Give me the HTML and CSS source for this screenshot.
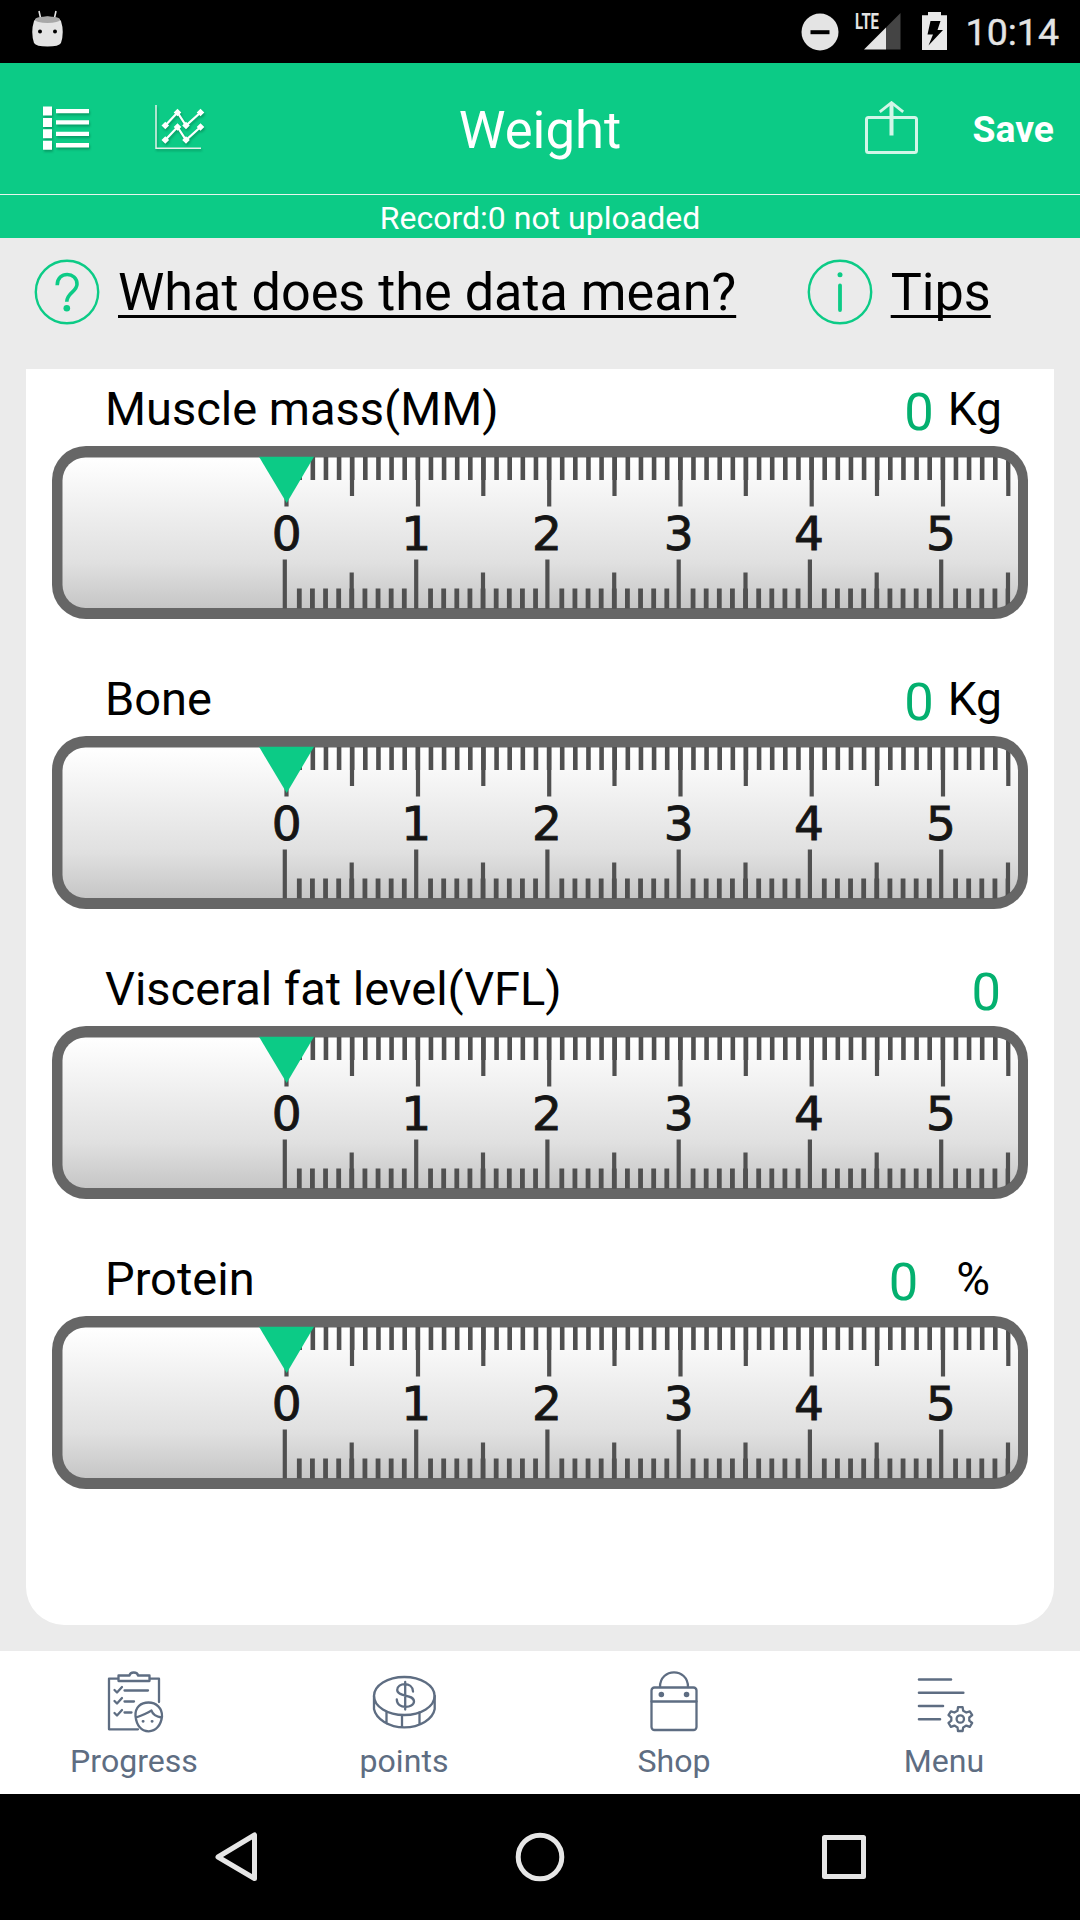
FILE: index.html
```html
<!DOCTYPE html>
<html lang="en">
<head>
<meta charset="utf-8">
<title>Weight</title>
<link rel="stylesheet" href="styles.css">
</head>
<body>
<div class="screen">
  <div class="status">
    <svg class="status-app" width="32" height="34" viewBox="32 14 32 34">
      <path d="M39 11l2 9M56 11l-2 9" stroke="#e4e4e4" stroke-width="1.6"/>
      <path d="M34 21Q35 17.500 47.500 16.500Q60 17.500 61 21Q64.500 32 61 43Q59 46.500 47.500 46.500Q36 46.500 34 43Q30.500 32 34 21Z" fill="#e4e4e4"/>
      <ellipse cx="47.500" cy="19.700" rx="12.500" ry="3.300" fill="#a8a8a8"/>
      <circle cx="40" cy="31.500" r="2"/><circle cx="55" cy="31.500" r="2"/>
    </svg>
    <div class="status-right">
      <svg class="status-icons" width="146" height="52" viewBox="801 0 146 52">
        <circle cx="820" cy="32" r="18.500" fill="#e4e4e4"/>
        <path d="M810.500 32.200H829.500" stroke="#000" stroke-width="4"/>
        <path d="M864 49.500L886 27.500V49.500Z" fill="#e4e4e4"/>
        <path d="M886 49.500V27.500L900.500 13V49.500Z" fill="#444"/>
        <text class="lte" x="855" y="29" textLength="24" lengthAdjust="spacingAndGlyphs">LTE</text>
        <path fill="#e9e9e9" fill-rule="evenodd" d="M928 12H941V15.300H947V50H922V15.300H928ZM930.500 21L927.500 34.500H933L928.500 45.500L943 30H937.500L940.500 21Z"/>
      </svg>
      <span class="clock">10:14</span>
    </div>
  </div>

  <div class="header">
    <div class="header-left">
      <svg class="shadow" width="48" height="46" viewBox="42 105 48 46" fill="#fff">
        <path d="M43 106.500h9v9h-9zM43 118h9v9h-9zM43 129.300h9v9h-9zM43 140.800h9v9h-9z"/>
        <path d="M56 109h33v4.300H56zM56 120.300h33v4.300H56zM56 131.800h33v4.300H56zM56 143.100h33v4.300H56z"/>
      </svg>
      <svg class="shadow chart" width="52" height="46" viewBox="154 105 52 46">
        <path d="M156 105V148.300H201" fill="none" stroke="#e3f3eb" stroke-width="1.500"/>
        <path d="M165.300 125.500L177.500 112.500L186 125.500L200.500 112.500M165.300 140L177.500 127L186 140L200.500 127" fill="none" stroke="#fff" stroke-width="2.200"/>
        <path fill="#fff" d="M165.300 121.700l3.800 3.800-3.800 3.800-3.800-3.800zM177.500 108.700l3.800 3.800-3.800 3.800-3.800-3.800zM186 121.700l3.800 3.800-3.800 3.800-3.800-3.800zM200.500 108.700l3.800 3.800-3.800 3.800-3.800-3.800zM165.300 136.200l3.800 3.800-3.800 3.800-3.800-3.800zM177.500 123.200l3.800 3.800-3.800 3.800-3.800-3.800zM186 136.200l3.800 3.800-3.800 3.800-3.800-3.800zM200.500 123.200l3.800 3.800-3.800 3.800-3.800-3.800z"/>
      </svg>
    </div>
    <div class="title">Weight</div>
    <div class="header-right">
      <svg width="54" height="54" viewBox="864 101 54 54" fill="none" stroke="#d2f6e8">
        <rect x="866.500" y="117.500" width="50" height="35" rx="2" stroke-width="3"/>
        <path d="M891.500 103V135.500" stroke-width="4"/>
        <path d="M879.800 111.800L891.500 102.600L903.200 111.800" stroke-width="2.800"/>
      </svg>
      <span class="save">Save</span>
    </div>
  </div>
  <div class="record">Record:0 not uploaded</div>

  <div class="main">
    <div class="links">
      <svg width="66" height="66" viewBox="0 0 66 66" fill="none" stroke="#0ccb86">
        <circle cx="33" cy="33" r="31.200" stroke-width="2.400"/>
        <path d="M23.200 26.200C23.200 11.500 43.300 12.500 43 25.300C42.800 33 33 33.500 32.800 42.800" stroke-width="3.600"/>
        <circle cx="32.800" cy="49.300" r="3.300" fill="#0ccb86" stroke="none"/>
      </svg>
      <span class="link">What does the data mean?</span>
      <svg class="info" width="66" height="66" viewBox="0 0 66 66" fill="none" stroke="#0ccb86">
        <circle cx="33" cy="33" r="31.200" stroke-width="2.400"/>
        <path d="M33 26.500V51" stroke-width="3.800" stroke-linecap="round"/>
        <circle cx="33" cy="15.800" r="2.500" fill="#0ccb86" stroke="none"/>
      </svg>
      <span class="link tips">Tips</span>
    </div>

    <div class="card">
      <svg class="defs" width="0" height="0">
        <defs>
          <linearGradient id="face" x1="0" y1="0" x2="0" y2="1">
            <stop offset="0" stop-color="#fff"/><stop offset=".4" stop-color="#ededed"/><stop offset=".7" stop-color="#e0e0e0"/><stop offset="1" stop-color="#c6c6c6"/>
          </linearGradient>
          <clipPath id="inside"><rect x="10.500" y="11" width="955" height="151.500" rx="23"/></clipPath>
          <symbol id="ruler" viewBox="0 0 976 173">
            <rect width="976" height="173" rx="34" fill="#666"/>
            <rect x="10.500" y="11.500" width="955.500" height="150.500" rx="23" fill="url(#face)"/>
            <g clip-path="url(#inside)">
              <g stroke="#505050" stroke-width="4.200">
                <path stroke-dasharray="4.600 8.525" stroke-width="23" d="M245.400 22.500H958"/>
                <path stroke-dasharray="4.800 8.325" stroke-width="21" d="M244.900 153H365M376.150 153H496.200M507.400 153H627.500M638.650 153H758.700M769.900 153H890M901.150 153H958"/>
                <path d="M300 11V50M431.300 11V50M562.500 11V50M693.800 11V50M825 11V50M956.300 11V50"/>
                <path d="M299.700 126.500V163M431 126.500V163M562.200 126.500V163M693.500 126.500V163M824.700 126.500V163M956 126.500V163"/>
                <path d="M234.500 11V60.500M366 11V60.500M497.200 11V60.500M628.500 11V60.500M759.700 11V60.500M891 11V60.500"/>
                <path d="M232.800 113.500V163M364.200 113.500V163M495.400 113.500V163M626.700 113.500V163M757.900 113.500V163M889.200 113.500V163"/>
              </g>
            </g>
            <path d="M207 10.800H262L234.700 57Z" fill="#0ccb86"/>
          </symbol>
        </defs>
      </svg>

      <div class="metric">
        <div class="metric-head"><span>Muscle mass(MM)</span><span class="value"><b>0</b><i>Kg</i></span></div>
        <svg class="ruler" viewBox="0 0 976 173"><use href="#ruler"/><text x="234.700" y="104">0</text><text x="364.200" y="104">1</text><text x="495" y="104">2</text><text x="626.700" y="104">3</text><text x="757" y="104">4</text><text x="889" y="104">5</text></svg>
      </div>
      <div class="metric">
        <div class="metric-head"><span>Bone</span><span class="value"><b>0</b><i>Kg</i></span></div>
        <svg class="ruler" viewBox="0 0 976 173"><use href="#ruler"/><text x="234.700" y="104">0</text><text x="364.200" y="104">1</text><text x="495" y="104">2</text><text x="626.700" y="104">3</text><text x="757" y="104">4</text><text x="889" y="104">5</text></svg>
      </div>
      <div class="metric">
        <div class="metric-head"><span>Visceral fat level(VFL)</span><span class="value"><b>0</b></span></div>
        <svg class="ruler" viewBox="0 0 976 173"><use href="#ruler"/><text x="234.700" y="104">0</text><text x="364.200" y="104">1</text><text x="495" y="104">2</text><text x="626.700" y="104">3</text><text x="757" y="104">4</text><text x="889" y="104">5</text></svg>
      </div>
      <div class="metric">
        <div class="metric-head"><span>Protein</span><span class="value percent"><b>0</b><i>%</i></span></div>
        <svg class="ruler" viewBox="0 0 976 173"><use href="#ruler"/><text x="234.700" y="104">0</text><text x="364.200" y="104">1</text><text x="495" y="104">2</text><text x="626.700" y="104">3</text><text x="757" y="104">4</text><text x="889" y="104">5</text></svg>
      </div>
    </div>
  </div>

  <div class="tabs">
    <div class="tab">
      <svg width="64" height="64" viewBox="102 1670 64 64">
        <path d="M118 1678.700H109V1729.300H138M150 1678.700H159V1702"/>
        <path d="M118.500 1675.500H129.500Q130 1672.500 133.800 1672.500Q137.600 1672.500 138 1675.500H149.500V1681H118.500Z"/>
        <path d="M124.500 1690.500H148M124.500 1701.500H134M124.500 1712.500H131.500M114.500 1690l2.500 2.500 5-5.500M114.500 1701l2.500 2.500 5-5.500M114.500 1713l2.500 2.500 5-5.500"/>
        <path d="M135.500 1716C135 1707 141 1702.500 148.500 1702.500C156 1702.500 162.500 1708 162 1716.500C161 1725 156 1731.300 148.700 1731.300C141 1731.300 136.500 1725 135.500 1716ZM136 1717.500Q146 1714 151.500 1710.500Q153 1716 161.500 1717.500"/>
        <path d="M143 1721.300h.2M152 1721.300h.2" stroke-width="2.800"/>
      </svg>
      <span>Progress</span>
    </div>
    <div class="tab">
      <svg width="64" height="64" viewBox="372 1670 64 64">
        <ellipse cx="404.300" cy="1696" rx="30.300" ry="19"/>
        <path d="M374 1696V1709C376 1719 389 1727.300 404.300 1727.300C420 1727.300 433 1719 434.700 1709V1696M386.500 1712V1723.500M402 1715.500V1727M419.500 1712.500V1723.500"/>
        <path d="M413 1691.500C412.500 1681.500 397 1682.500 397.200 1690C397.500 1697.500 413.800 1693.500 414 1701.500C413.800 1708.500 397 1709.500 396.800 1699.500M405.200 1682V1709.500"/>
      </svg>
      <span>points</span>
    </div>
    <div class="tab">
      <svg width="64" height="64" viewBox="642 1670 64 64">
        <rect x="651.500" y="1687.500" width="45" height="42.500" rx="3"/>
        <path d="M651.500 1701.500H696.500M660 1687C660 1667.500 688 1667.500 688 1687"/>
        <path d="M661.300 1694.500h.1M686.500 1694.500h.1" stroke-width="5.500"/>
      </svg>
      <span>Shop</span>
    </div>
    <div class="tab">
      <svg width="64" height="64" viewBox="912 1670 64 64">
        <path d="M919 1679.500H951M919 1692.700H963.300M919 1706H943M919 1719.200H940" stroke-width="2.600"/>
        <circle cx="960.300" cy="1719" r="3.700"/>
        <path d="M957.500 1710.800L958 1707.200H962.600L963.200 1710.800L966.300 1712.500L969.800 1711.300L972.200 1715.200L969.300 1717.500V1720.700L972.200 1723L969.800 1726.900L966.300 1725.600L963.200 1727.400L962.600 1731H958L957.500 1727.400L954.400 1725.600L950.900 1726.900L948.500 1723L951.300 1720.700V1717.500L948.500 1715.200L950.900 1711.300L954.400 1712.500Z"/>
      </svg>
      <span>Menu</span>
    </div>
  </div>

  <div class="navbar">
    <svg width="46" height="54" viewBox="213 1830 46 54"><path d="M254.500 1835V1878.500L218 1857Z"/></svg>
    <svg width="54" height="54" viewBox="513 1830 54 54"><circle cx="540" cy="1857" r="21.800"/></svg>
    <svg width="46" height="54" viewBox="821 1830 46 54"><rect x="824.500" y="1837.500" width="39" height="39"/></svg>
  </div>
</div>
</body>
</html>
```
FILE: styles.css
```css
* { box-sizing: border-box; }
body { margin: 0; background: #000; font-family: Roboto, sans-serif; }
svg { display: block; flex: none; }
.screen { width: 1080px; height: 1920px; display: flex; flex-direction: column; overflow: hidden; }

.status { height: 63px; display: flex; justify-content: space-between; background: #000; padding: 0 21px 0 32px; }
.status-app { overflow: visible; margin-top: 14px; }
.status-right { display: flex; gap: 19px; }
.lte { font-size: 22px; font-weight: 700; fill: #e4e4e4; }
.clock { color: #e4e4e4; font-size: 37.5px; font-weight: 400; line-height: 43px; padding-top: 11px; -webkit-text-stroke: .4px #e4e4e4; }

.header { height: 132px; background: #0ccb86; border-bottom: 1px solid #e8f5ee; display: grid; grid-template-columns: 1fr 200px 1fr; align-items: center; color: #fff; }
.header-left { display: flex; padding: 0 0 2px 42px; gap: 64px; }
.shadow { filter: drop-shadow(1px 2px 1px rgba(0, 70, 40, .35)); overflow: visible; }
.title { text-align: center; font-size: 52.7px; line-height: 62px; padding-top: 2px; }
.header-right { display: flex; justify-content: flex-end; align-items: center; padding: 0 26px 2px 0; gap: 55px; }
.save { font-size: 37.3px; font-weight: 700; line-height: 43px; padding-top: 4px; }

.record { height: 43px; background: #0ccb86; color: #fff; font-size: 32px; line-height: 47px; text-align: center; }

.main { height: 1413px; background: #ebebeb; padding: 0 26px 26px; }
.links { height: 131px; display: flex; align-items: flex-start; padding: 21px 0 0 8px; }
.links svg { margin-right: 18px; }
.link { font-size: 52.2px; line-height: 68px; white-space: nowrap; text-decoration: underline; text-decoration-thickness: 3px; text-underline-offset: 5px; text-decoration-skip-ink: none; }
.link:first-of-type { margin-right: 70.5px; }

.card { height: 1256px; background: #fff; border-radius: 0 0 38px 38px; padding: 0 26px; }
.defs { position: absolute; }
.metric { height: 290px; }
.metric-head { height: 77px; padding: 0 27px 0 53px; display: flex; justify-content: space-between; font-size: 47px; line-height: 80px; }
.value { display: flex; }
.value b { font-weight: 400; font-size: 52.5px; color: #04b06f; line-height: 87px; }
.value i { font-style: normal; margin: 0 -1px 0 14px; font-size: 46.2px; }
.percent { padding-right: 11px; }
.percent i { margin: 0 0 0 38px; }
.ruler { width: 976px; height: 173px; }
.ruler text { font-family: "DejaVu Sans", sans-serif; font-size: 47px; text-anchor: middle; fill: #151515; stroke: #151515; stroke-width: .9; }

.tabs { height: 143px; background: #fff; display: grid; grid-template-columns: repeat(4, 270px); }
.tab { display: flex; flex-direction: column; align-items: center; padding: 19px 2px 0 0; color: #5e6d82; font-size: 32.1px; line-height: 38px; gap: 8px; }
.tab svg { fill: none; stroke: #5e6d82; stroke-width: 2.3; stroke-linecap: round; stroke-linejoin: round; }

.navbar { height: 126px; background: #000; display: flex; justify-content: space-between; padding: 36px 213px 0; }
.navbar svg { fill: none; stroke: #e6e6e6; stroke-width: 5; stroke-linejoin: round; }
```
